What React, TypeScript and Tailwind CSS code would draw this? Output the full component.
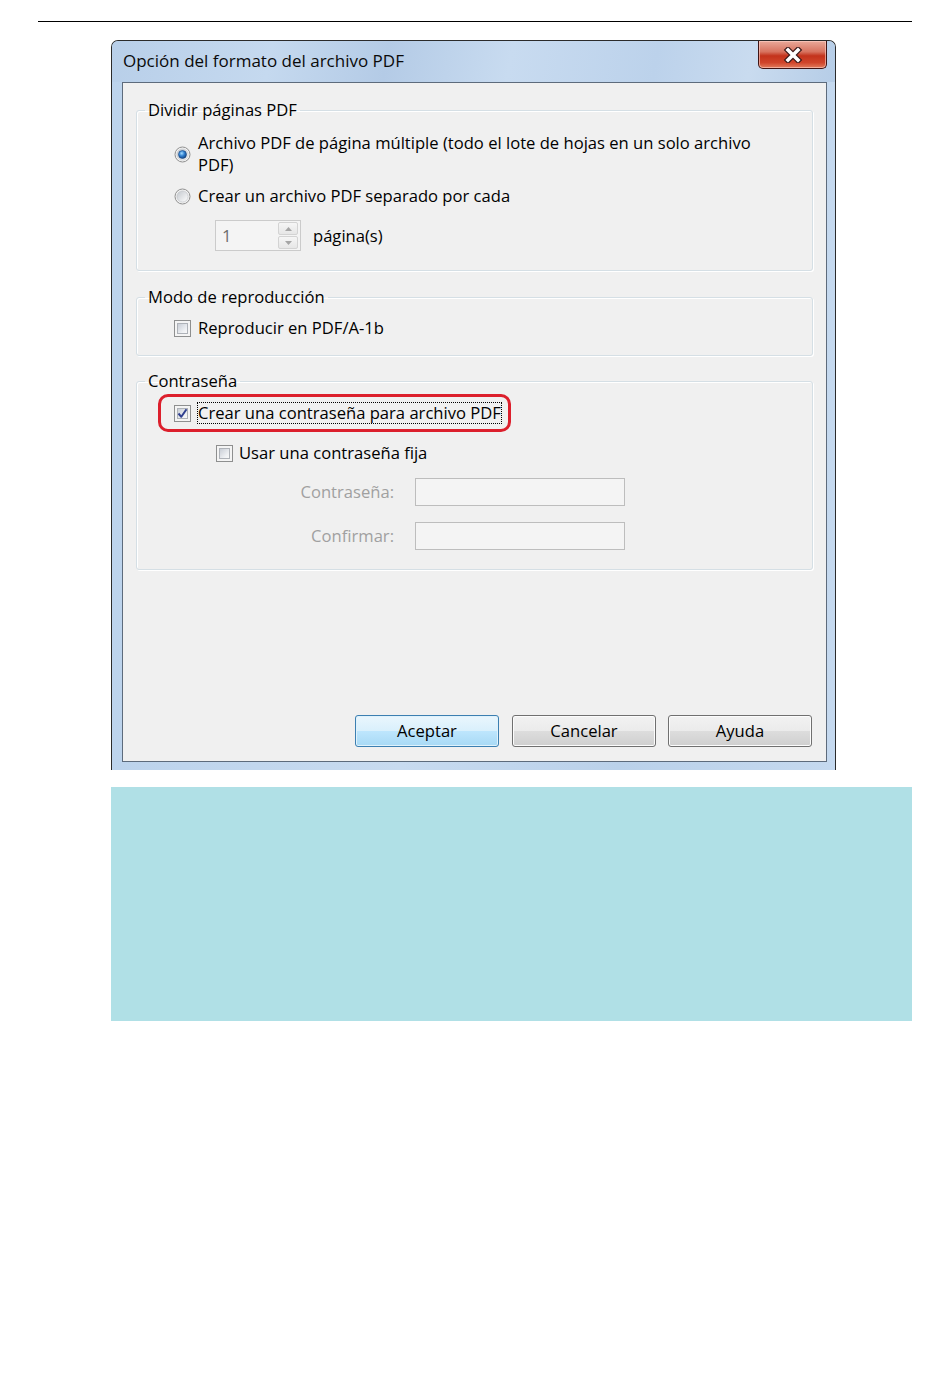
import React from "react";

function CheckBox({ checked }: { checked?: boolean }) {
  return (
    <span className="flex h-[17px] w-[17px] shrink-0 items-center justify-center border border-[#8e8f8f] bg-[#f4f4f4] p-[2px]">
      <span className="relative flex h-full w-full items-center justify-center border border-[#aeb2b8] bg-[linear-gradient(135deg,#c9ced6,#eef0f3_70%,#f8f8f8)]">
        {checked && (
          <svg width="11" height="11" viewBox="0 0 11 11" className="absolute">
            <path d="M1.5 5.5 L4.3 8.8 L9.5 1.2" fill="none" stroke="#2f3f8f" strokeWidth="2" strokeLinejoin="round" />
          </svg>
        )}
      </span>
    </span>
  );
}

function Radio({ checked }: { checked?: boolean }) {
  return (
    <svg width="17" height="17" viewBox="0 0 17 17" className="shrink-0">
      <defs>
        <linearGradient id="rbg" x1="0" y1="0" x2="1" y2="1">
          <stop offset="0" stopColor="#c3c7cd" />
          <stop offset="1" stopColor="#ffffff" />
        </linearGradient>
        <radialGradient id="rdot" cx="0.4" cy="0.35" r="0.75">
          <stop offset="0" stopColor="#a4dcff" />
          <stop offset="0.45" stopColor="#2f7fd0" />
          <stop offset="1" stopColor="#0c3670" />
        </radialGradient>
      </defs>
      <circle cx="8.5" cy="8.5" r="7.5" fill="#f4f4f4" stroke="#8f8f8f" />
      <circle cx="8.5" cy="8.5" r="5.6" fill="url(#rbg)" stroke="#b9bcc1" strokeWidth="0.6" />
      {checked && <circle cx="8.5" cy="8.5" r="4" fill="url(#rdot)" stroke="#17457f" strokeWidth="0.6" />}
    </svg>
  );
}

function Button({ label, primary, className }: { label: string; primary?: boolean; className?: string }) {
  return (
    <div
      className={
        "flex h-[32px] items-center justify-center rounded-[3px] border text-[16.6px] " +
        (primary
          ? "border-[#3c7fb1] bg-[linear-gradient(#eaf6fd_0%,#d9f0fc_49%,#bee6fd_50%,#a7d9f5_100%)] shadow-[inset_0_0_0_1px_#dff2fc] "
          : "border-[#707070] bg-[linear-gradient(#f2f2f2_0%,#ebebeb_49%,#dddddd_50%,#cfcfcf_100%)] shadow-[inset_0_0_0_1px_#fcfcfc] ") +
        (className ?? "")
      }
    >
      {label}
    </div>
  );
}

function Group({ title, className, children }: { title: string; className?: string; children: React.ReactNode }) {
  return (
    <fieldset
      className={
        "rounded-[3px] border border-[#d5dfe5] shadow-[inset_1px_1px_0_#ffffff,1px_1px_0_#ffffff] " + (className ?? "")
      }
    >
      <legend className="ml-[8px] px-[3px] text-[16.6px] leading-[22px]">{title}</legend>
      {children}
    </fieldset>
  );
}

export default function App() {
  return (
    <div className="h-[1397px] w-[950px] bg-white font-['Open_Sans','Noto_Sans',sans-serif] text-black">
      <div className="pl-[38px] pt-[21px]">
        <div className="h-px w-[874px] bg-black" />
      </div>

      {/* Dialog window */}
      <div className="ml-[111px] mt-[18px] flex h-[730px] w-[725px] flex-col rounded-t-[7px] border-x border-t border-[#2b2b2b] bg-[linear-gradient(90deg,#bcd3ec,#c8dbf0_40%,#bad1ea_70%,#c5d9ef)]">
        {/* Title bar */}
        <div className="flex h-[41px] shrink-0 items-start justify-between rounded-t-[6px] bg-[linear-gradient(100deg,#b8cfe9_0%,#c5d9ef_22%,#b4cbe6_38%,#c8dbf0_55%,#bcd2eb_75%,#c9dbef_88%,#b6cde7_100%)]">
          <div className="pl-[11px] pt-[8px] text-[17px] leading-[24px] text-[#0a0a0a]">Opción del formato del archivo PDF</div>
          <div className="mr-[8px] flex h-[28px] w-[69px] items-center justify-center rounded-b-[5px] border-x border-b border-[#3f1414] bg-[linear-gradient(180deg,#e9a99a_0%,#d7735f_40%,#c3331c_55%,#d0452b_80%,#e27c5c_100%)] shadow-[inset_0_0_0_1px_rgba(255,210,200,0.6)]">
            <svg width="22" height="16" viewBox="0 0 22 16">
              <path d="M6 3 L16 13 M16 3 L6 13" stroke="#3a1a1a" strokeWidth="6" strokeLinecap="square" />
              <path d="M6 3 L16 13 M16 3 L6 13" stroke="#ffffff" strokeWidth="3.6" strokeLinecap="square" />
            </svg>
          </div>
        </div>

        {/* Client area */}
        <div className="ml-[10px] mr-[8px] flex h-[680px] shrink-0 flex-col border border-[#5d6b7c] bg-[#f0f0f0] px-[13px] pb-[13px] pt-[16px]">
          <Group title="Dividir páginas PDF" className="pb-[19px]">
            <div className="mt-[11px] flex items-center pl-[37px]">
              <Radio checked />
              <div className="ml-[7px] text-[16.6px] leading-[22px]">
                Archivo PDF de página múltiple (todo el lote de hojas en un solo archivo
                <br />
                PDF)
              </div>
            </div>
            <div className="mt-[9px] flex items-center pl-[37px]">
              <Radio />
              <div className="ml-[7px] text-[16.6px] leading-[22px]">Crear un archivo PDF separado por cada</div>
            </div>
            <div className="mt-[13px] flex items-center pl-[78px]">
              <div className="flex h-[31px] w-[86px] items-center justify-between border border-[#cbcbcb] bg-[#f4f4f4] pl-[6px] pr-[2px]">
                <span className="text-[16.6px] leading-[22px] text-[#6d6d6d]">1</span>
                <div className="flex flex-col gap-px">
                  <div className="flex h-[13px] w-[20px] items-center justify-center rounded-[2px] border border-[#d3d3d3] bg-[linear-gradient(#f6f6f6,#e6e6e6)]">
                    <svg width="7" height="4" viewBox="0 0 7 4"><path d="M0 4 L3.5 0 L7 4 Z" fill="#a5a5a5" /></svg>
                  </div>
                  <div className="flex h-[13px] w-[20px] items-center justify-center rounded-[2px] border border-[#d3d3d3] bg-[linear-gradient(#f6f6f6,#e6e6e6)]">
                    <svg width="7" height="4" viewBox="0 0 7 4"><path d="M0 0 L3.5 4 L7 0 Z" fill="#a5a5a5" /></svg>
                  </div>
                </div>
              </div>
              <div className="ml-[12px] text-[16.6px] leading-[22px]">página(s)</div>
            </div>
          </Group>

          <Group title="Modo de reproducción" className="mt-[15px] pb-[16px]">
            <div className="mt-[9px] flex items-center pl-[37px]">
              <CheckBox />
              <div className="ml-[7px] text-[16.6px] leading-[22px]">Reproducir en PDF/A-1b</div>
            </div>
          </Group>

          <Group title="Contraseña" className="mt-[14px] pb-[19px]">
            <div className="relative mt-[10px] flex items-center pl-[37px]">
              <CheckBox checked />
              <div className="ml-[6px] border border-dotted border-black text-[16.6px] leading-[20px]">
                Crear una contraseña para archivo PDF
              </div>
              <div className="absolute left-[21px] top-[-8px] h-[38px] w-[353px] rounded-[10px] border-[3px] border-[#dc1f2c]" />
            </div>
            <div className="mt-[18px] flex items-center pl-[79px]">
              <CheckBox />
              <div className="ml-[6px] text-[16.6px] leading-[22px]">Usar una contraseña fija</div>
            </div>
            <div className="mt-[14px] flex items-center">
              <div className="w-[257px] text-right text-[16.6px] leading-[22px] text-[#a0a0a0]">Contraseña:</div>
              <div className="ml-[21px] h-[28px] w-[210px] border border-[#bdbdbd] bg-[#f4f4f4]" />
            </div>
            <div className="mt-[16px] flex items-center">
              <div className="w-[257px] text-right text-[16.6px] leading-[22px] text-[#a0a0a0]">Confirmar:</div>
              <div className="ml-[21px] h-[28px] w-[210px] border border-[#bdbdbd] bg-[#f4f4f4]" />
            </div>
          </Group>

          <div className="mb-px mr-px mt-auto flex justify-end">
            <Button label="Aceptar" primary className="w-[144px]" />
            <Button label="Cancelar" className="ml-[13px] w-[144px]" />
            <Button label="Ayuda" className="ml-[12px] w-[144px]" />
          </div>
        </div>
      </div>

      {/* Note box */}
      <div className="ml-[111px] mt-[17px] h-[234px] w-[801px] bg-[#b0e0e6]" />
    </div>
  );
}
